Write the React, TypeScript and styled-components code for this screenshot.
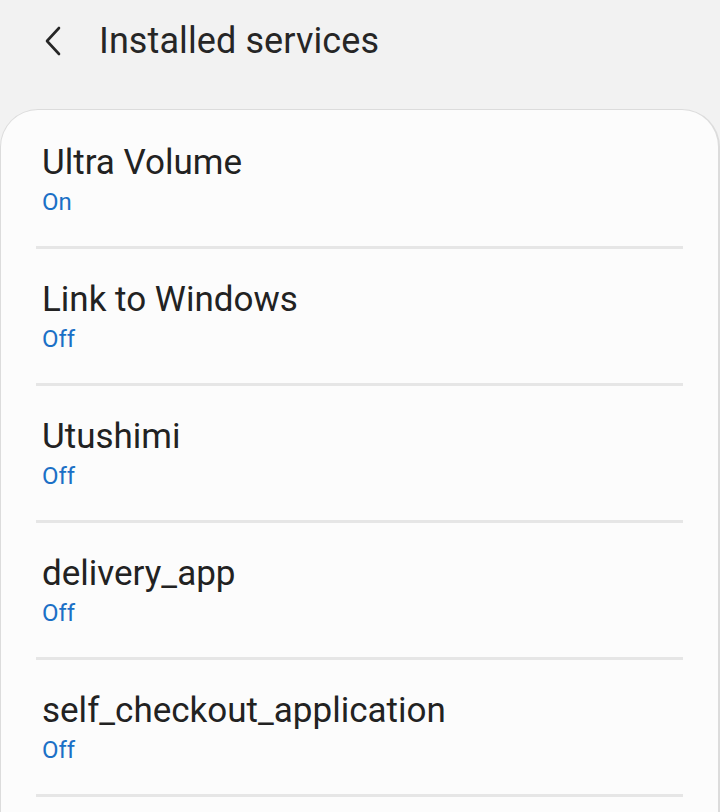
import styled, {createGlobalStyle} from "styled-components";

const GlobalStyle = createGlobalStyle`
  html, body {
    margin: 0;
    padding: 0;
    background: #f2f2f2;
    font-family: Roboto, "Liberation Sans", sans-serif;
  }
`;

type Service = {
    name: string,
    enabled: boolean,
}

const services: Service[] = [
    {name: 'Ultra Volume', enabled: true},
    {name: 'Link to Windows', enabled: false},
    {name: 'Utushimi', enabled: false},
    {name: 'delivery_app', enabled: false},
    {name: 'self_checkout_application', enabled: false},
];

const BackIcon = () => (
    <svg width="22" height="32" viewBox="0 0 22 32" fill="none">
        <path d="M17 3 L5 16 L17 29" stroke="#262626" strokeWidth="2.6" strokeLinecap="round" strokeLinejoin="round"/>
    </svg>
);

const App = () => {
    return (
        <Page>
            <GlobalStyle/>
            <Header>
                <BackButton><BackIcon/></BackButton>
                <Title>Installed services</Title>
            </Header>
            <Card>
                {services.map(s => (
                    <Row key={s.name}>
                        <Name>{s.name}</Name>
                        <Status>{s.enabled ? 'On' : 'Off'}</Status>
                    </Row>
                ))}
            </Card>
        </Page>
    )
}
export default App;

const Page = styled.div`
  width: 720px;
  height: 812px;
  overflow: hidden;
  background: #f2f2f2;
`;

const Header = styled.div`
  display: flex;
  align-items: center;
  height: 82px;
  padding-left: 42px;
  margin-bottom: 27px;
`;

const BackButton = styled.div`
  display: flex;
  align-items: center;
  width: 57px;
`;

const Title = styled.div`
  font-size: 36px;
  color: #262626;
  letter-spacing: 0.1px;
`;

const Card = styled.div`
  background: #fcfcfc;
  border: 1px solid #dcdcdc;
  border-right-width: 2px;
  border-bottom: none;
  border-radius: 38px 38px 0 0;
  padding-top: 2px;
  min-height: 720px;
`;

const Row = styled.div`
  margin: 0 35px;
  padding: 30px 7px 0 6px;
  height: 137px;
  box-sizing: border-box;
  border-bottom: 3px solid #e6e6e6;
`;

const Name = styled.div`
  font-size: 35px;
  line-height: 42px;
  color: #222;
`;

const Status = styled.div`
  font-size: 24px;
  line-height: 32px;
  color: #1b70c6;
  margin-top: 2px;
`;
